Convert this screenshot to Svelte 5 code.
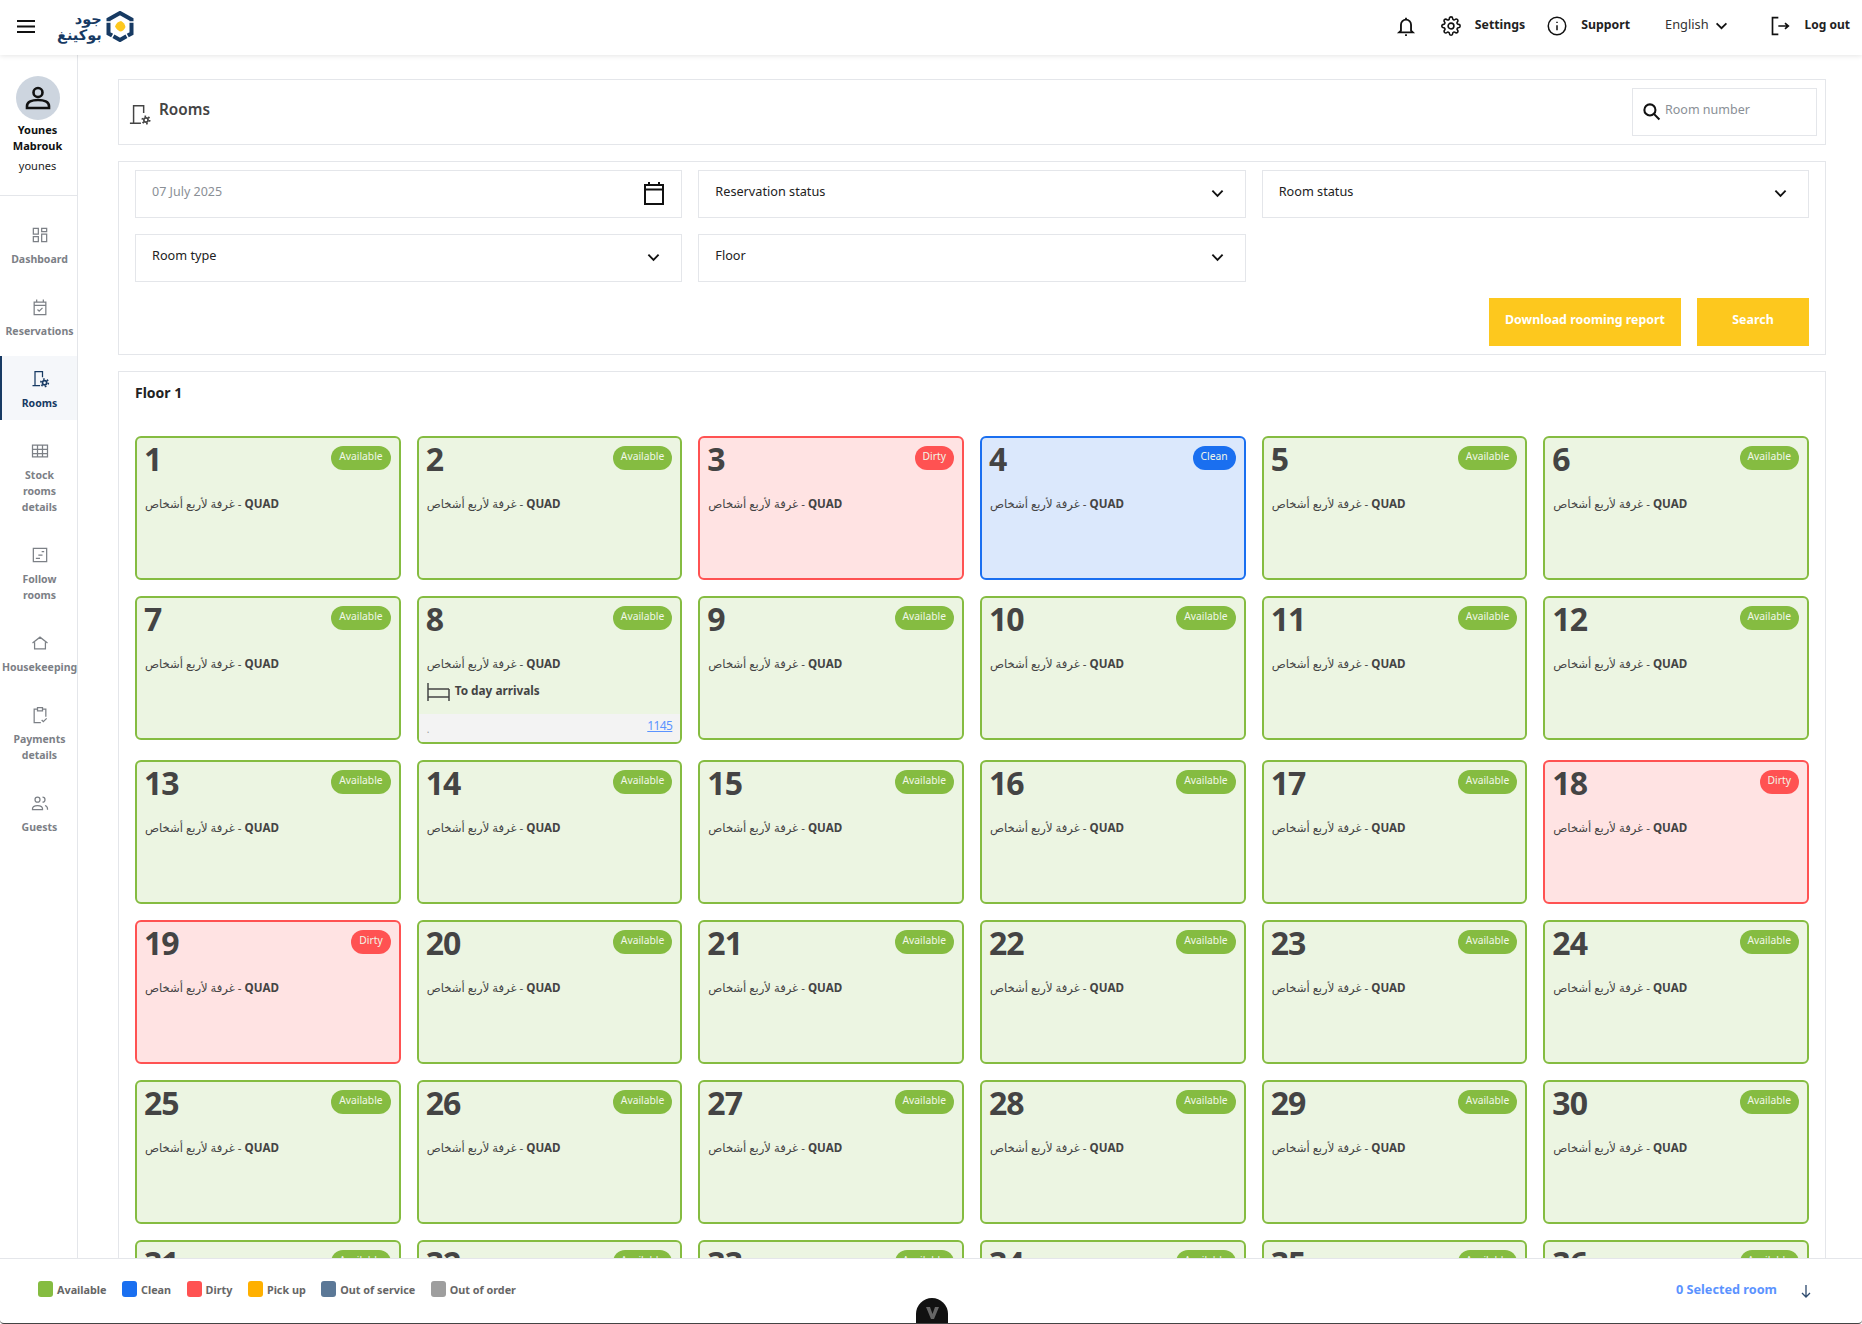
<script>
  const nav = [
    { label: ['Dashboard'], d: 'M4 4h6v7H4zM14 4h6v4h-6zM14 11h6v9h-6zM4 14h6v6H4z' },
    { label: ['Reservations'], d: 'M5 6h14v15H5zM5 10h14M8 3v4M16 3v4M9 15l2 2 4-4' },
    { label: ['Rooms'], d: 'M6 20V3h9v7M3 20h9M11 11h.01', gear: true, active: true },
    { label: ['Stock', 'rooms', 'details'], d: 'M3 5h18v14H3zM3 10h18M3 15h18M9 5v14M15 5v14' },
    { label: ['Follow', 'rooms'], d: 'M4 4h16v16H4zM14 8h3M10 12h5M7 16h5' },
    { label: ['Housekeeping'], d: 'M3 12l9-7 9 7M5.500 11v8h13v-8M9 15h.01M12 15h.01M15 15h.01' },
    { label: ['Payments', 'details'], d: 'M9 5H5v16h8M15 5h4v9M9 3h6v4H9zM14 18l2 2 4-4' },
    { label: ['Guests'], d: 'M9 5a3 3 0 1 0 0 6 3 3 0 0 0 0-6zM3 20v-1c0-2 2-4 6-4s6 2 6 4v1zM15 5a3 3 0 0 1 0 6M18 15c2 .6 3 2 3 4v1' }
  ];

  const legend = [
    ['Available', '#85bc41'],
    ['Clean', '#1a6ff0'],
    ['Dirty', '#ff5252'],
    ['Pick up', '#ffb000'],
    ['Out of service', '#5b7897'],
    ['Out of order', '#9e9e9e']
  ];

  const special = { 3: 'Dirty', 4: 'Clean', 18: 'Dirty', 19: 'Dirty' };
  const rooms = Array.from({ length: 36 }, (_, i) => ({
    no: i + 1,
    status: special[i + 1] ?? 'Available',
    arrival: i + 1 === 8 ? '1145' : null
  }));
</script>

<div class="page">
  <header class="topbar">
    <svg class="burger" viewBox="0 0 18 13"><path d="M0 1h18M0 6.500h18M0 12h18" /></svg>
    <div class="logo">
      <div class="logo-text" dir="rtl"><span class="l1">جود</span><span>بوكينغ</span></div>
      <svg width="28" height="31" viewBox="0 0 28 31">
        <path d="M14 2l11.500 6.500v14L14 29 2.500 22.500v-14z" fill="none" stroke="#173a63" stroke-width="4" stroke-dasharray="15 1.500" />
        <path d="M9 15.500c1-3 3-5 6-5.500 2 1 4 3 4.500 6-1 2.500-3 4.500-5.500 4.500-2-1-4-3-5-5z" fill="#fdc81e" />
      </svg>
    </div>

    <div class="top-actions">
      <svg class="ic bell" viewBox="0 0 24 24"><path d="M6.500 17V10.500a5.500 5.500 0 0 1 11 0V17l2 2h-15zM11 22h2M12 3v2" /></svg>
      <svg class="ic gear" viewBox="0 0 24 24"><circle cx="12" cy="12" r="3.500" /><path d="M19.400 15a1.650 1.650 0 0 0 .33 1.820l.06.06a2 2 0 0 1 0 2.830 2 2 0 0 1-2.830 0l-.06-.06a1.650 1.650 0 0 0-1.820-.33 1.650 1.650 0 0 0-1 1.510V21a2 2 0 0 1-2 2 2 2 0 0 1-2-2v-.09A1.650 1.650 0 0 0 9 19.400a1.650 1.650 0 0 0-1.820.33l-.06.06a2 2 0 0 1-2.830 0 2 2 0 0 1 0-2.830l.06-.06a1.650 1.650 0 0 0 .33-1.820 1.650 1.650 0 0 0-1.510-1H3a2 2 0 0 1-2-2 2 2 0 0 1 2-2h.09A1.650 1.650 0 0 0 4.600 9a1.650 1.650 0 0 0-.33-1.820l-.06-.06a2 2 0 0 1 0-2.830 2 2 0 0 1 2.830 0l.06.06a1.650 1.650 0 0 0 1.820.33H9a1.650 1.650 0 0 0 1-1.510V3a2 2 0 0 1 2-2 2 2 0 0 1 2 2v.09a1.650 1.650 0 0 0 1 1.510 1.650 1.650 0 0 0 1.820-.33l.06-.06a2 2 0 0 1 2.830 0 2 2 0 0 1 0 2.830l-.06.06a1.650 1.650 0 0 0-.33 1.820V9a1.650 1.650 0 0 0 1.510 1H21a2 2 0 0 1 2 2 2 2 0 0 1-2 2h-.09a1.650 1.650 0 0 0-1.510 1z" /></svg>
      <span class="top-link settings">Settings</span>
      <svg class="ic info" viewBox="0 0 24 24"><circle cx="12" cy="12" r="10.500" /><path d="M12 11v6M12 7v1.500" /></svg>
      <span class="top-link support">Support</span>
      <span class="lang">English</span>
      <svg class="lang-chev" viewBox="0 0 14 9"><path d="M1.500 1.500L7 7l5.500-5.500" /></svg>
      <svg class="ic logout" viewBox="0 0 24 24"><path d="M10 2H3v20h7M10 12h12M18 8.500l4 3.500-4 3.500" /></svg>
      <span class="top-link logoutlabel">Log out</span>
    </div>
  </header>

  <div class="shell">
    <aside class="sidebar">
      <div class="profile">
        <div class="avatar">
          <svg width="28" height="28" viewBox="0 0 28 28"><circle cx="14" cy="8.500" r="4.500" /><path d="M3 24v-2c0-4 5-6 11-6s11 2 11 6v2z" /></svg>
        </div>
        <div class="name">Younes<br />Mabrouk</div>
        <div class="username">younes</div>
      </div>
      <nav class="nav">
        {#each nav as item}
          <div class="nav-item" class:active={item.active}>
            <svg width="20" height="20" viewBox="0 0 24 24">
              <path d={item.d} />
              {#if item.gear}
                <circle cx="17.500" cy="16.500" r="2.500" stroke-width="2" />
                <circle cx="17.500" cy="16.500" r="4.500" stroke-width="2" stroke-dasharray="2 2.700" />
              {/if}
            </svg>
            <div class="nav-label">{#each item.label as line}<div>{line}</div>{/each}</div>
          </div>
        {/each}
      </nav>
    </aside>

    <main class="content">
      <section class="card title-card">
        <svg class="room-ic" width="22" height="22" viewBox="0 0 24 24">
          <path d="M5 22V3h11v8M1 22h12M11 12h.01" />
          <circle cx="18.500" cy="18.500" r="2.300" stroke-width="1.800" />
          <circle cx="18.500" cy="18.500" r="4" stroke-width="2" stroke-dasharray="1.800 2.390" />
        </svg>
        <h1>Rooms</h1>
        <div class="box search">
          <svg width="19" height="19" viewBox="0 0 24 24"><circle cx="10" cy="10" r="7" /><path d="M15 15l7 7" /></svg>
          <span class="placeholder">Room number</span>
        </div>
      </section>

      <section class="card filters">
        <div class="filter-grid">
          <div class="box field">
            <span class="placeholder">07 July 2025</span>
            <svg class="cal" width="24" height="26" viewBox="0 0 24 26"><path d="M3 5h18v19H3zM3 9.500h18M7 2v3M17 2v3" /></svg>
          </div>
          <div class="box field"><span>Reservation status</span><svg class="chev" viewBox="0 0 14 9"><path d="M1.500 1.500L7 7l5.500-5.500" /></svg></div>
          <div class="box field"><span>Room status</span><svg class="chev" viewBox="0 0 14 9"><path d="M1.500 1.500L7 7l5.500-5.500" /></svg></div>
          <div class="box field"><span>Room type</span><svg class="chev" viewBox="0 0 14 9"><path d="M1.500 1.500L7 7l5.500-5.500" /></svg></div>
          <div class="box field"><span>Floor</span><svg class="chev" viewBox="0 0 14 9"><path d="M1.500 1.500L7 7l5.500-5.500" /></svg></div>
        </div>
        <div class="actions">
          <button class="btn report">Download rooming report</button>
          <button class="btn find">Search</button>
        </div>
      </section>

      <section class="card floor">
        <h2>Floor 1</h2>
        <div class="rooms">
          {#each rooms as room}
            <article class="tile {room.status.toLowerCase()}">
              <div class="tile-head">
                <span class="no">{room.no}</span>
                <span class="badge">{room.status}</span>
              </div>
              <div class="type"><span dir="auto">غرفة لأربع أشخاص</span> - <b>QUAD</b></div>
              {#if room.arrival}
                <div class="arrivals">
                  <svg width="23" height="19" viewBox="0 0 23 19"><path d="M1 0v18M22 6v12M1 6h21M1 14h21" /></svg>
                  <span>To day arrivals</span>
                </div>
                <div class="tile-foot"><span class="dot">.</span><a href="#top">{room.arrival}</a></div>
              {/if}
            </article>
          {/each}
        </div>
      </section>
    </main>
  </div>

  <footer class="legend-bar">
    <div class="legend">
      {#each legend as [name, color]}
        <div class="legend-item"><i style="background: {color}"></i>{name}</div>
      {/each}
    </div>
    <div class="selected">
      <span>0 Selected room</span>
      <svg width="12" height="14" viewBox="0 0 12 14"><path d="M6 1v12M2 9l4 4 4-4" /></svg>
    </div>
    <div class="pull">
      <svg width="13" height="12" viewBox="0 0 13 12"><path d="M0 0h4l2.500 7L9 0h4L8 12H5z" /></svg>
    </div>
  </footer>
</div>

<style>
  :global(body) {
    margin: 0;
    background: #fff;
    font-family: "Noto Sans", "DejaVu Sans", sans-serif;
    color: #222;
  }

  .page {
    position: relative;
    height: 100vh;
    box-sizing: border-box;
    padding-bottom: 65px;
    overflow: hidden;
    display: flex;
    flex-direction: column;
  }

  .topbar {
    height: 55px;
    flex-shrink: 0;
    display: flex;
    align-items: center;
    background: #fff;
    box-shadow: 0 1px 5px rgba(0, 0, 0, 0.1);
    position: relative;
    z-index: 2;
  }

  .burger {
    width: 18px;
    height: 13px;
    margin-left: 17px;
    margin-top: -3px;
    fill: none;
    stroke: #111;
    stroke-width: 2;
  }

  .logo {
    display: flex;
    align-items: center;
    gap: 4px;
    margin-left: 22px;
    margin-top: -2px;
  }

  .logo-text {
    display: flex;
    flex-direction: column;
    font-family: "DejaVu Sans", sans-serif;
    font-weight: 700;
    font-size: 14.500px;
    line-height: 16px;
    color: #173a63;
  }

  .top-actions {
    margin-left: auto;
    display: flex;
    align-items: center;
    padding-right: 12px;
    margin-top: -3px;
  }

  .ic {
    fill: none;
    stroke: #111;
    stroke-width: 2;
    flex-shrink: 0;
  }

  .bell { width: 22px; height: 22px; }
  .gear { width: 20px; height: 20px; margin-left: 24px; stroke-width: 1.900; }
  .info { width: 20px; height: 20px; margin-left: 22px; stroke-width: 1.800; }
  .logout { width: 20px; height: 20px; margin-left: 42px; }

  .top-link {
    font-size: 12.300px;
    font-weight: 700;
    color: #222;
    margin-top: -4px;
  }

  .settings { margin-left: 14px; }
  .support { margin-left: 14px; }
  .logoutlabel { margin-left: 15px; font-size: 12px; }

  .lang {
    font-size: 12.800px;
    margin-left: 35px;
    margin-top: -4px;
    color: #333;
  }

  .lang-chev {
    width: 13px;
    height: 8px;
    margin-left: 6px;
    fill: none;
    stroke: #111;
    stroke-width: 2;
  }

  .shell {
    flex: 1;
    display: flex;
    min-height: 0;
  }

  .sidebar {
    width: 77px;
    flex-shrink: 0;
    border-right: 1px solid #e4e6ea;
    background: #fff;
  }

  .profile {
    height: 141px;
    box-sizing: border-box;
    padding-top: 21px;
    border-bottom: 1px solid #e4e6ea;
    display: flex;
    flex-direction: column;
    align-items: center;
    padding-right: 2px;
  }

  .avatar {
    width: 44px;
    height: 44px;
    border-radius: 50%;
    background: #cdd5df;
    display: flex;
    align-items: center;
    justify-content: center;
    flex-shrink: 0;
  }

  .avatar svg {
    fill: none;
    stroke: #111;
    stroke-width: 2.600;
  }

  .name {
    margin-top: 2px;
    font-size: 11px;
    font-weight: 700;
    line-height: 16px;
    text-align: center;
    color: #111;
  }

  .username {
    font-size: 11px;
    line-height: 16px;
    margin-top: 4px;
    color: #222;
  }

  .nav {
    padding-top: 16px;
    display: flex;
    flex-direction: column;
    gap: 8px;
  }

  .nav-item {
    padding: 13px 0 9px;
    display: flex;
    flex-direction: column;
    align-items: center;
    border-left: 2px solid transparent;
    color: #7c8086;
  }

  .nav-item svg {
    fill: none;
    stroke: currentColor;
    stroke-width: 1.500;
  }

  .nav-item.active {
    background: #f5f7fa;
    border-left-color: #173a63;
    color: #173a63;
  }

  .nav-label {
    margin-top: 6px;
    font-size: 10.500px;
    font-weight: 700;
    line-height: 16px;
    text-align: center;
    white-space: nowrap;
  }

  .content {
    flex: 1;
    min-width: 0;
    padding: 24px 36px 0 40px;
    display: flex;
    flex-direction: column;
    gap: 16px;
    overflow: hidden;
  }

  .card {
    border: 1px solid #e4e6ea;
    background: #fff;
    flex-shrink: 0;
  }

  .box {
    border: 1px solid #e4e6ea;
    box-sizing: border-box;
    height: 48px;
    display: flex;
    align-items: center;
    font-size: 12.700px;
    color: #222;
  }

  .box span {
    margin-top: -6px;
  }

  .placeholder {
    color: #8a8f96;
    font-size: 12.500px;
  }

  .title-card {
    display: flex;
    align-items: center;
    height: 66px;
    box-sizing: border-box;
    padding: 0 8px 0 10px;
  }

  .room-ic {
    fill: none;
    stroke: #444;
    stroke-width: 1.600;
    margin-top: 3px;
  }

  h1 {
    margin: -7px 0 0 8px;
    font-size: 15.300px;
    font-weight: 600;
    color: #444;
  }

  .search {
    margin-left: auto;
    width: 185px;
    padding-left: 9px;
    gap: 4px;
  }

  .search svg {
    fill: none;
    stroke: #111;
    stroke-width: 2.600;
    margin-top: -2px;
  }

  .filters {
    padding: 8px 16px;
  }

  .filter-grid {
    display: grid;
    grid-template-columns: repeat(3, 1fr);
    gap: 16px;
  }

  .field {
    justify-content: space-between;
    padding: 0 21px 0 16px;
  }

  .cal {
    fill: none;
    stroke: #111;
    stroke-width: 2;
    margin: -2px -6px 0 0;
  }

  .chev {
    width: 13px;
    height: 9px;
    fill: none;
    stroke: #111;
    stroke-width: 2;
    margin-top: -2px;
  }

  .actions {
    display: flex;
    justify-content: flex-end;
    gap: 16px;
    margin-top: 16px;
  }

  .btn {
    height: 48px;
    border: 0;
    background: #fdc81e;
    color: #fff;
    font: 700 12.400px "Noto Sans", sans-serif;
    padding: 0 0 6px;
  }

  .report { width: 192px; }
  .find { width: 112px; }

  .floor {
    padding: 11px 16px 16px;
  }

  h2 {
    margin: 0 0 33px;
    font-size: 14px;
    font-weight: 700;
    line-height: 20px;
    color: #222;
  }

  .rooms {
    display: grid;
    grid-template-columns: repeat(6, 1fr);
    gap: 16px;
    align-items: start;
  }

  .tile {
    min-height: 144px;
    box-sizing: border-box;
    border: 2px solid #85bc41;
    border-radius: 6px;
    background: #ecf5e2;
    color: #444;
    overflow: hidden;
    display: flex;
    flex-direction: column;
    --tone: #85bc41;
  }

  .tile.dirty {
    border-color: #ff5252;
    background: #ffe3e3;
    --tone: #ff5252;
  }

  .tile.clean {
    border-color: #1a6ff0;
    background: #dbe8fc;
    --tone: #1a6ff0;
  }

  .tile-head {
    display: flex;
    justify-content: space-between;
    align-items: flex-start;
    padding: 8px 8px 0;
    height: 42px;
  }

  .no {
    margin: -3px 0 0 -1px;
    font-size: 32px;
    font-weight: 700;
    line-height: 32px;
    letter-spacing: -1px;
    color: #444;
  }

  .badge {
    height: 24px;
    padding: 0 8px 4px;
    box-sizing: border-box;
    border-radius: 12px;
    background: var(--tone);
    color: #f1f7e8;
    font-size: 10.300px;
    line-height: 20px;
  }

  .type {
    padding: 6px 8px 0;
    font-size: 11.600px;
    line-height: 20px;
    color: #444;
  }

  .arrivals {
    display: flex;
    align-items: flex-start;
    gap: 5px;
    padding: 8px 8px 0;
    height: 34px;
    box-sizing: border-box;
    font-size: 11.800px;
    font-weight: 700;
    line-height: 17px;
  }

  .arrivals svg {
    fill: none;
    stroke: #444;
    stroke-width: 1.500;
    margin-top: 1px;
  }

  .tile-foot {
    margin-top: 6px;
    height: 28px;
    box-sizing: border-box;
    background: #f3f3f3;
    padding: 0 8px 6px;
    display: flex;
    justify-content: space-between;
    align-items: center;
    font-size: 12px;
    letter-spacing: -0.600px;
  }

  .tile-foot a {
    color: #5b93ff;
  }

  .dot {
    color: #999;
    font-size: 10px;
    margin-top: 8px;
  }

  .legend-bar {
    position: absolute;
    left: 0;
    right: 0;
    bottom: 0;
    height: 66px;
    box-sizing: border-box;
    background: #fff;
    border-top: 1px solid #e4e6ea;
    border-bottom: 1px solid #444;
    border-radius: 0 0 4px 4px;
    display: flex;
    align-items: center;
    justify-content: space-between;
    padding: 0 50px 4px 38px;
    z-index: 3;
  }

  .legend {
    display: flex;
    gap: 15.500px;
  }

  .legend-item {
    display: flex;
    align-items: center;
    gap: 4px;
    font-size: 10.800px;
    font-weight: 700;
    color: #666;
  }

  .legend-item i {
    width: 15px;
    height: 16px;
    border-radius: 3px;
  }

  .selected {
    display: flex;
    align-items: center;
    gap: 23px;
    color: #5b93ff;
    font-size: 12.700px;
    font-weight: 700;
  }

  .selected svg {
    fill: none;
    stroke: #2d4a6e;
    stroke-width: 1.300;
    margin-top: 4px;
  }

  .pull {
    position: absolute;
    left: 916px;
    bottom: 0;
    width: 32px;
    height: 25px;
    border-radius: 16px 16px 0 0;
    background: #111;
    display: flex;
    align-items: center;
    justify-content: center;
    padding-top: 4px;
    box-sizing: border-box;
  }

  .pull svg {
    fill: #666;
  }
</style>
